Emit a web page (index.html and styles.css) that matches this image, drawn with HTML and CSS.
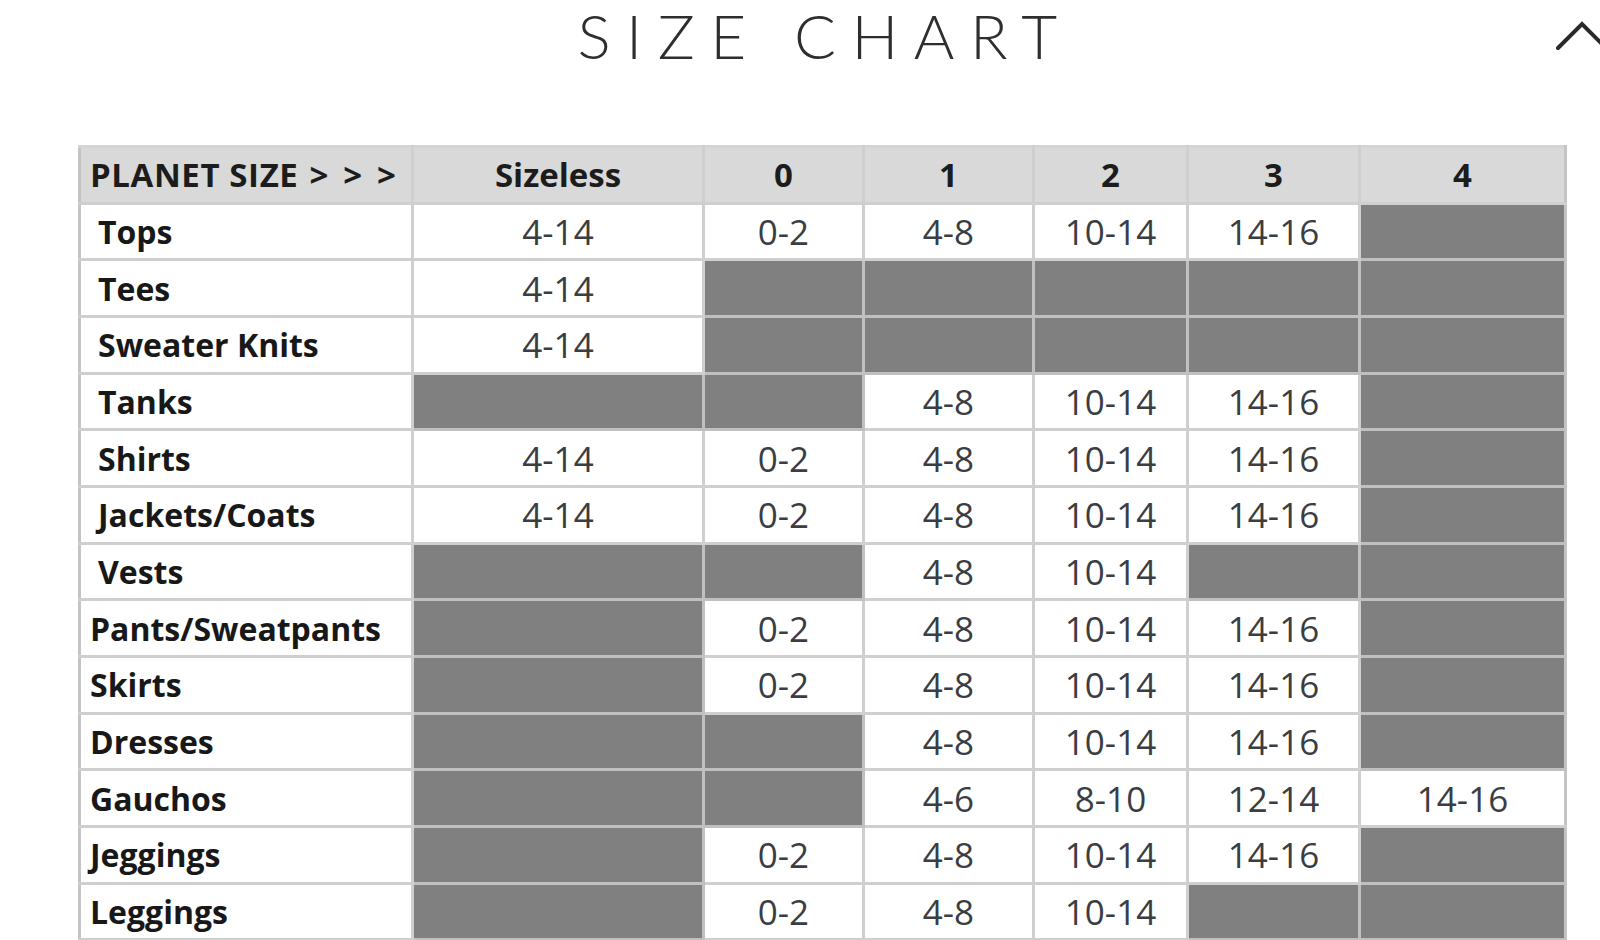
FILE: index.html
```html
<!DOCTYPE html>
<html lang="en">
<head>
<meta charset="utf-8">
<title>Size Chart</title>
<link rel="stylesheet" href="styles.css">
</head>
<body>
<div class="page">
  <header class="head">
    <div class="spacer"></div>
    <h1 class="title">SIZE CHART</h1>
    <div class="toggle">
      <svg class="chev" viewBox="0 0 44 32" width="44" height="32" aria-hidden="true">
        <polyline points="2,28 26,4 50,28" fill="none" stroke="#2a2a2a" stroke-width="4" stroke-linecap="round" stroke-linejoin="miter"/>
      </svg>
    </div>
  </header>
  <table class="chart">
    <colgroup>
      <col class="c-name"><col class="c-sl"><col class="c-0"><col class="c-1"><col class="c-2"><col class="c-3"><col class="c-4">
    </colgroup>
    <thead>
      <tr>
        <th class="lead">PLANET SIZE <span class="arrows">&gt; &gt; &gt;</span></th>
        <th>Sizeless</th><th>0</th><th>1</th><th>2</th><th>3</th><th>4</th>
      </tr>
    </thead>
    <tbody>
      <tr><th class="in">Tops</th><td>4-14</td><td>0-2</td><td>4-8</td><td>10-14</td><td>14-16</td><td class="x"></td></tr>
      <tr><th class="in">Tees</th><td>4-14</td><td class="x"></td><td class="x"></td><td class="x"></td><td class="x"></td><td class="x"></td></tr>
      <tr><th class="in">Sweater Knits</th><td>4-14</td><td class="x"></td><td class="x"></td><td class="x"></td><td class="x"></td><td class="x"></td></tr>
      <tr><th class="in">Tanks</th><td class="x"></td><td class="x"></td><td>4-8</td><td>10-14</td><td>14-16</td><td class="x"></td></tr>
      <tr><th class="in">Shirts</th><td>4-14</td><td>0-2</td><td>4-8</td><td>10-14</td><td>14-16</td><td class="x"></td></tr>
      <tr><th class="in">Jackets/Coats</th><td>4-14</td><td>0-2</td><td>4-8</td><td>10-14</td><td>14-16</td><td class="x"></td></tr>
      <tr><th class="in">Vests</th><td class="x"></td><td class="x"></td><td>4-8</td><td>10-14</td><td class="x"></td><td class="x"></td></tr>
      <tr><th>Pants/Sweatpants</th><td class="x"></td><td>0-2</td><td>4-8</td><td>10-14</td><td>14-16</td><td class="x"></td></tr>
      <tr><th>Skirts</th><td class="x"></td><td>0-2</td><td>4-8</td><td>10-14</td><td>14-16</td><td class="x"></td></tr>
      <tr><th>Dresses</th><td class="x"></td><td class="x"></td><td>4-8</td><td>10-14</td><td>14-16</td><td class="x"></td></tr>
      <tr><th>Gauchos</th><td class="x"></td><td class="x"></td><td>4-6</td><td>8-10</td><td>12-14</td><td>14-16</td></tr>
      <tr><th>Jeggings</th><td class="x"></td><td>0-2</td><td>4-8</td><td>10-14</td><td>14-16</td><td class="x"></td></tr>
      <tr><th>Leggings</th><td class="x"></td><td>0-2</td><td>4-8</td><td>10-14</td><td class="x"></td><td class="x"></td></tr>
    </tbody>
  </table>
</div>
</body>
</html>
```

FILE: styles.css
```css
html, body {
  margin: 0;
  padding: 0;
  background: #ffffff;
}
body {
  width: 1600px;
  height: 940px;
  overflow: hidden;
}
.page {
  width: 1600px;
}
.head {
  display: grid;
  grid-template-columns: 1fr auto 1fr;
  align-items: start;
  height: 145px;
}
.title {
  margin: 4px 0 0 0;
  padding-left: 50px;
  font-family: Lato, "Open Sans", sans-serif;
  font-weight: 300;
  font-size: 62px;
  line-height: 62px;
  letter-spacing: 15.5px;
  color: #2e2e2e;
}
.toggle {
  justify-self: end;
  margin-top: 20px;
  width: 44px;
  height: 32px;
}
.chev {
  display: block;
  overflow: hidden;
}
.chart {
  margin-left: 78px;
  width: 1486px;
  table-layout: fixed;
  border-collapse: collapse;
  font-family: "Open Sans", "Noto Sans", sans-serif;
}
.c-name { width: 333px; }
.c-sl { width: 291px; }
.c-0 { width: 160px; }
.c-1 { width: 170px; }
.c-2 { width: 154px; }
.c-3 { width: 172px; }
.c-4 { width: 206px; }
.chart tr {
  height: 56.67px;
}
.chart th, .chart td {
  border: 3px solid #cfcfcf;
  padding: 0;
  vertical-align: middle;
  white-space: nowrap;
  overflow: hidden;
}
.chart thead th {
  background: #d9d9d9;
  font-weight: 700;
  font-size: 33px;
  color: #1c1c1c;
  text-align: center;
  border-top-color: #d4d4d4;
}
.chart thead th.lead {
  text-align: left;
  padding-left: 9px;
  letter-spacing: 0.6px;
}
.arrows {
  word-spacing: 5px;
  padding-left: 2px;
}
.chart tbody th {
  text-align: left;
  font-weight: 700;
  font-size: 32px;
  color: #181818;
  padding-left: 9px;
  background: #ffffff;
}
.chart tbody th.in {
  padding-left: 17px;
}
.chart td {
  text-align: center;
  font-size: 35px;
  font-weight: 400;
  color: #3a3d42;
  background: #ffffff;
}
.chart td.x {
  background: #808080;
  border-color: #c0c0c0;
}
.chart th:first-child {
  border-left-color: #c4c4c4;
}
.chart th:last-child, .chart td:last-child {
  border-right-color: #c4c4c4;
}
```
